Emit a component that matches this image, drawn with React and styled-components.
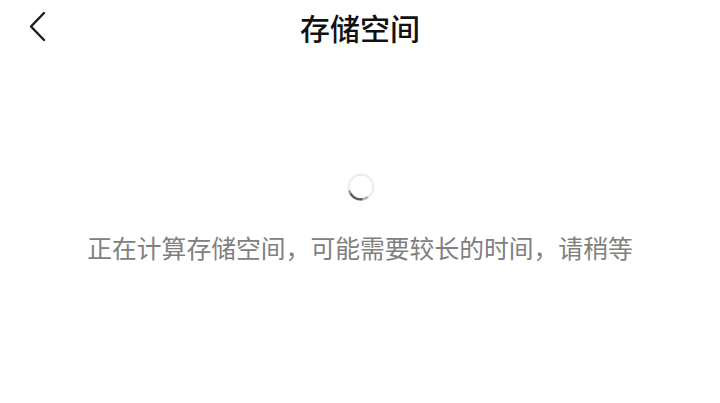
import React from 'react';
import styled, { createGlobalStyle } from 'styled-components';

const GlobalStyle = createGlobalStyle`
  html, body {
    margin: 0;
    padding: 0;
    background: #ffffff;
  }
  body {
    font-family: "Noto Sans CJK SC", "Noto Sans", sans-serif;
  }
`;

const Page = styled.div`
  width: 720px;
  height: 403px;
  background: #ffffff;
  display: flex;
  flex-direction: column;
  overflow: hidden;
`;

const Header = styled.div`
  height: 54px;
  display: grid;
  grid-template-columns: 80px 1fr 80px;
  align-items: center;
`;

const BackButton = styled.button`
  border: none;
  background: none;
  padding: 0 0 0 26px;
  height: 54px;
  display: flex;
  align-items: center;
  cursor: pointer;
`;

const Title = styled.h1`
  margin: 0;
  text-align: center;
  font-size: 30px;
  font-weight: 500;
  color: #111111;
  line-height: 54px;
`;

const Body = styled.div`
  display: flex;
  flex-direction: column;
  align-items: center;
  padding-top: 119px;
`;

const Spinner = styled.div`
  width: 28px;
  height: 28px;
  display: flex;
  transform: translateX(1px);
`;

const Message = styled.p`
  margin: 30px 0 0;
  font-size: 24.8px;
  line-height: 32px;
  color: #808080;
`;

function BackIcon() {
  return (
    <svg width="22" height="32" viewBox="0 0 22 32" fill="none">
      <path d="M18 2 L5 15.5 L18 29" stroke="#1a1a1a" strokeWidth="2.4" strokeLinecap="round" strokeLinejoin="round" />
    </svg>
  );
}

function Loader() {
  return (
    <Spinner>
      <svg width="28" height="28" viewBox="0 0 28 28">
        <circle cx="14" cy="14" r="12.3" fill="none" stroke="#ececec" strokeWidth="2.3" />
        <path d="M2.1 17.5 A12.3 12.3 0 0 0 4.2 21.4" fill="none" stroke="#9a9a9a" strokeWidth="2.4" />
        <path d="M4.2 21.4 A12.3 12.3 0 0 0 15.5 26.2" fill="none" stroke="#5e5e5e" strokeWidth="2.5" strokeLinecap="round" />
        <path d="M15.5 26.2 A12.3 12.3 0 0 0 21 24" fill="none" stroke="#b4b4b4" strokeWidth="2.3" />
      </svg>
    </Spinner>
  );
}

export default function App() {
  return (
    <>
      <GlobalStyle />
      <Page>
        <Header>
          <BackButton aria-label="返回">
            <BackIcon />
          </BackButton>
          <Title>存储空间</Title>
          <div />
        </Header>
        <Body>
          <Loader />
          <Message>正在计算存储空间，可能需要较长的时间，请稍等</Message>
        </Body>
      </Page>
    </>
  );
}
